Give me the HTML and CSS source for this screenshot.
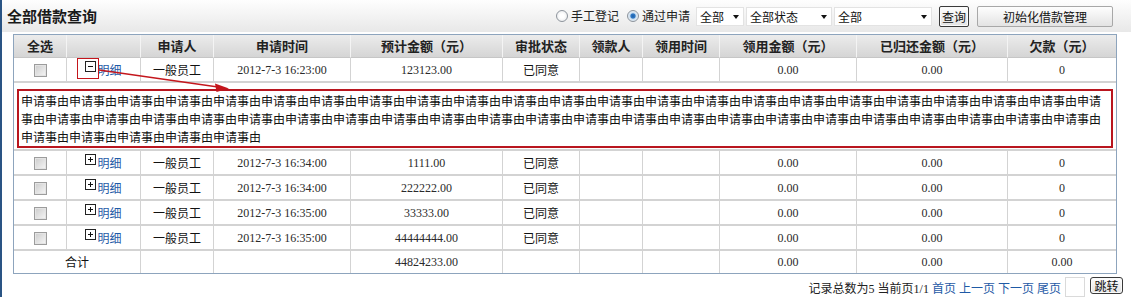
FILE: index.html
```html
<!DOCTYPE html>
<html>
<head>
<meta charset="UTF-8">
  <link rel="stylesheet" href="styles.css">
  <title>全部借款查询</title>
</head>
<body>
<div class="page">
  <div class="topbar">
    <h1 class="title">全部借款查询</h1>
    <form class="tools">
      <label class="opt"><input type="radio" name="src">手工登记</label>
      <label class="opt"><input type="radio" name="src" checked>通过申请</label>
      <span class="sel s1"><select><option>全部</option></select></span>
      <span class="sel s2"><select><option>全部状态</option></select></span>
      <span class="sel s3"><select><option>全部</option></select></span>
      <button type="button" class="btn dark q">查询</button>
      <button type="button" class="btn init">初始化借款管理</button>
    </form>
  </div>

  <div class="grid">
    <table class="list">
      <tr>
        <th class="c1">全选</th>
        <th class="c2"></th>
        <th class="c3">申请人</th>
        <th class="c4">申请时间</th>
        <th class="c5">预计金额（元）</th>
        <th class="c6">审批状态</th>
        <th class="c7">领款人</th>
        <th class="c8">领用时间</th>
        <th class="c9">领用金额（元）</th>
        <th class="c10">已归还金额（元）</th>
        <th class="c11">欠款（元）</th>
      </tr>
      <tr>
        <td><input type="checkbox" class="chk"></td>
        <td><span class="tog open"></span><a href="#" class="more">明细</a></td>
        <td class="cn">一般员工</td>
        <td>2012-7-3 16:23:00</td>
        <td>123123.00</td>
        <td class="cn">已同意</td>
        <td></td>
        <td></td>
        <td>0.00</td>
        <td>0.00</td>
        <td>0</td>
      </tr>
      <tr>
        <td colspan="11" class="detail"><div class="reason">申请事由申请事由申请事由申请事由申请事由申请事由申请事由申请事由申请事由申请事由申请事由申请事由申请事由申请事由申请事由申请事由申请事由申请事由申请事由申请事由申请事由申请事由申请事由申请事由申请事由申请事由申请事由申请事由申请事由申请事由申请事由申请事由申请事由申请事由申请事由申请事由申请事由申请事由申请事由申请事由申请事由申请事由申请事由申请事由申请事由申请事由申请事由申请事由申请事由申请事由</div></td>
      </tr>
      <tr>
        <td><input type="checkbox" class="chk"></td>
        <td><span class="tog"></span><a href="#" class="more">明细</a></td>
        <td class="cn">一般员工</td>
        <td>2012-7-3 16:34:00</td>
        <td>1111.00</td>
        <td class="cn">已同意</td>
        <td></td>
        <td></td>
        <td>0.00</td>
        <td>0.00</td>
        <td>0</td>
      </tr>
      <tr>
        <td><input type="checkbox" class="chk"></td>
        <td><span class="tog"></span><a href="#" class="more">明细</a></td>
        <td class="cn">一般员工</td>
        <td>2012-7-3 16:34:00</td>
        <td>222222.00</td>
        <td class="cn">已同意</td>
        <td></td>
        <td></td>
        <td>0.00</td>
        <td>0.00</td>
        <td>0</td>
      </tr>
      <tr>
        <td><input type="checkbox" class="chk"></td>
        <td><span class="tog"></span><a href="#" class="more">明细</a></td>
        <td class="cn">一般员工</td>
        <td>2012-7-3 16:35:00</td>
        <td>33333.00</td>
        <td class="cn">已同意</td>
        <td></td>
        <td></td>
        <td>0.00</td>
        <td>0.00</td>
        <td>0</td>
      </tr>
      <tr>
        <td><input type="checkbox" class="chk"></td>
        <td><span class="tog"></span><a href="#" class="more">明细</a></td>
        <td class="cn">一般员工</td>
        <td>2012-7-3 16:35:00</td>
        <td>44444444.00</td>
        <td class="cn">已同意</td>
        <td></td>
        <td></td>
        <td>0.00</td>
        <td>0.00</td>
        <td>0</td>
      </tr>
      <tr class="sum">
        <td colspan="2" class="cn">合计</td>
        <td></td>
        <td></td>
        <td>44824233.00</td>
        <td></td>
        <td></td>
        <td></td>
        <td>0.00</td>
        <td>0.00</td>
        <td>0.00</td>
      </tr>
    </table>
  </div>

  <div class="pager">
    <span>记录总数为5 当前页1/1 <a href="#">首页</a> <a href="#">上一页</a> <a href="#">下一页</a> <a href="#">尾页</a></span>
    <input type="text" class="go">
    <button type="button" class="btn dark jump">跳转</button>
  </div>

  <!-- annotation drawn over the grid -->
  <div class="mark-box"></div>
  <svg class="mark-arrow" width="1131" height="297" viewBox="0 0 1131 297">
    <line x1="99" y1="70" x2="218" y2="87" stroke="#c4161c" stroke-width="1.3"/>
    <polygon points="229,88.5 215,83.5 216.5,92" fill="#c4161c"/>
  </svg>
</div>
</body>
</html>
```

FILE: styles.css
```css
body
{
  margin: 0;
  font-family: "Liberation Serif", "Noto Sans CJK SC", serif;
  font-size: 12px;
  color: #222;
  background-color: #fff;
}
.page
{
  position: relative;
  min-height: 297px;
  border-left: 2px solid #2a5484;
}

/* top bar */
.topbar
{
  height: 32px;
  display: flex;
  align-items: center;
  justify-content: space-between;
  padding: 0 18px 0 5px;
  background: linear-gradient(#fefefe, #e8e8e8);
}
.title
{
  margin: 0;
  font: bold 15px/20px "Noto Sans CJK SC", sans-serif;
  color: #1a1a1a;
}
.tools
{
  display: flex;
  align-items: center;
  margin: 0;
  font-family: "Noto Sans CJK SC", sans-serif;
}
.opt
{
  display: flex;
  align-items: center;
  line-height: 18px;
  margin-right: 8px;
}
.opt:nth-child(2)
{
  margin-right: 6px;
}
.opt input
{
  appearance: none;
  width: 12px;
  height: 12px;
  margin: 0 3px 0 0;
  border: 1px solid #8d949c;
  border-radius: 50%;
  background: radial-gradient(circle, #ffffff 30%, #e2e4e7 100%);
}
.opt input:checked
{
  background: radial-gradient(circle, #1d5ea8 0, #2f78c4 30%, #cfe0f0 45%, #f4f6f8 100%);
}
.sel
{
  position: relative;
  display: block;
  height: 19px;
  margin-right: 2px;
}
.sel select
{
  appearance: none;
  width: 100%;
  height: 19px;
  margin: 0;
  padding: 0 0 0 3px;
  border: 1px solid #e3e3e3;
  background-color: #fff;
  font: 12px/17px "Noto Sans CJK SC", sans-serif;
  color: #111;
}
.sel::after
{
  content: "";
  position: absolute;
  right: 5px;
  top: 8px;
  border-left: 3px solid transparent;
  border-right: 3px solid transparent;
  border-top: 4px solid #111;
}
.s1 { width: 48px; }
.s2 { width: 86px; }
.s3 { width: 98px; margin-right: 7px; }

.btn
{
  height: 21px;
  padding: 0;
  font: 12px/17px "Noto Sans CJK SC", sans-serif;
  color: #111;
  border: 1px solid #a8a8a8;
  border-radius: 2px;
  background: linear-gradient(#fefefe, #e3e3e3);
}
.btn.dark
{
  border-color: #3a3a3a;
  box-shadow: inset 0 0 0 1px #fafafa;
}
.q
{
  width: 30px;
  margin-right: 8px;
}
.init
{
  width: 136px;
}

/* grid */
.grid
{
  padding: 2px 0 0 11px;
}
.list
{
  width: 1104px;
  table-layout: fixed;
  border: 1px solid #8da4bd;
  border-spacing: 0;
}
.list th
{
  box-sizing: border-box;
  height: 23px;
  padding: 0;
  font: bold 13px/22px "Noto Sans CJK SC", sans-serif;
  color: #222;
  background: linear-gradient(#ececec, #d5d5d5);
  border-bottom: 1px solid #c6c6c6;
  border-right: 1px solid #f4f4f4;
}
.c1 { width: 53px; }
.c2 { width: 74px; }
.c3 { width: 73px; }
.c4 { width: 137px; }
.c5 { width: 152px; }
.c6 { width: 77px; }
.c7 { width: 63px; }
.c8 { width: 77px; }
.c9 { width: 137px; }
.c10 { width: 151px; }
.list th:last-child,
.list td:last-child
{
  border-right: 0;
}
.list td
{
  box-sizing: border-box;
  height: 24px;
  padding: 0;
  text-align: center;
  line-height: 22px;
  white-space: nowrap;
  color: #2a2a2a;
  border-bottom: 2px solid #d3d3d3;
  border-right: 1px solid #d3d3d3;
}
.list td.cn
{
  font-family: "Noto Sans CJK SC", sans-serif;
  color: #111;
}
.list .sum td
{
  height: 22px;
  border-bottom: 0;
}
.chk
{
  appearance: none;
  width: 13px;
  height: 13px;
  margin: 0;
  vertical-align: middle;
  border: 1px solid #9c9c9c;
  background: linear-gradient(135deg, #cbcbcb, #f7f7f7);
  box-shadow: inset 0 0 0 1px #e4e4e4;
}
.tog
{
  position: relative;
  display: inline-block;
  width: 9px;
  height: 9px;
  margin-right: 1px;
  vertical-align: 1px;
  border: 1px solid #222;
  background-color: #fff;
}
.tog::before
{
  content: "";
  position: absolute;
  left: 2px;
  top: 4px;
  width: 5px;
  height: 1px;
  background-color: #111;
}
.tog::after
{
  content: "";
  position: absolute;
  left: 4px;
  top: 2px;
  width: 1px;
  height: 5px;
  background-color: #111;
}
.tog.open::after
{
  display: none;
}
.more
{
  font-family: "Noto Sans CJK SC", sans-serif;
  color: #1f5aa6;
  text-decoration: none;
  vertical-align: -2px;
}
.list td.detail
{
  height: 68px;
  padding: 6px 3px 1px 3px;
  text-align: left;
  white-space: normal;
}
.reason
{
  padding: 1px 2px 0 2px;
  border: 2px solid #b9161f;
  font: 12px/18px "Noto Sans CJK SC", sans-serif;
  color: #111;
  word-break: break-all;
}

/* pager */
.pager
{
  display: flex;
  justify-content: flex-end;
  align-items: flex-start;
  margin-top: 3px;
  padding-right: 8px;
}
.pager span
{
  line-height: 22px;
}
.pager a
{
  font-family: "Noto Sans CJK SC", sans-serif;
  color: #1f5aa6;
  text-decoration: none;
}
.go
{
  width: 20px;
  height: 20px;
  box-sizing: border-box;
  margin: 0 5px 0 4px;
  padding: 0;
  border: 1px solid #dadada;
}
.jump
{
  width: 33px;
  height: 17px;
  line-height: 13px;
  border-radius: 3px;
}

/* annotation */
.mark-box
{
  position: absolute;
  left: 75px;
  top: 58px;
  width: 22px;
  height: 21px;
  box-sizing: border-box;
  border: 1px solid #c4161c;
}
.mark-arrow
{
  position: absolute;
  left: -2px;
  top: 0;
  pointer-events: none;
}
```
